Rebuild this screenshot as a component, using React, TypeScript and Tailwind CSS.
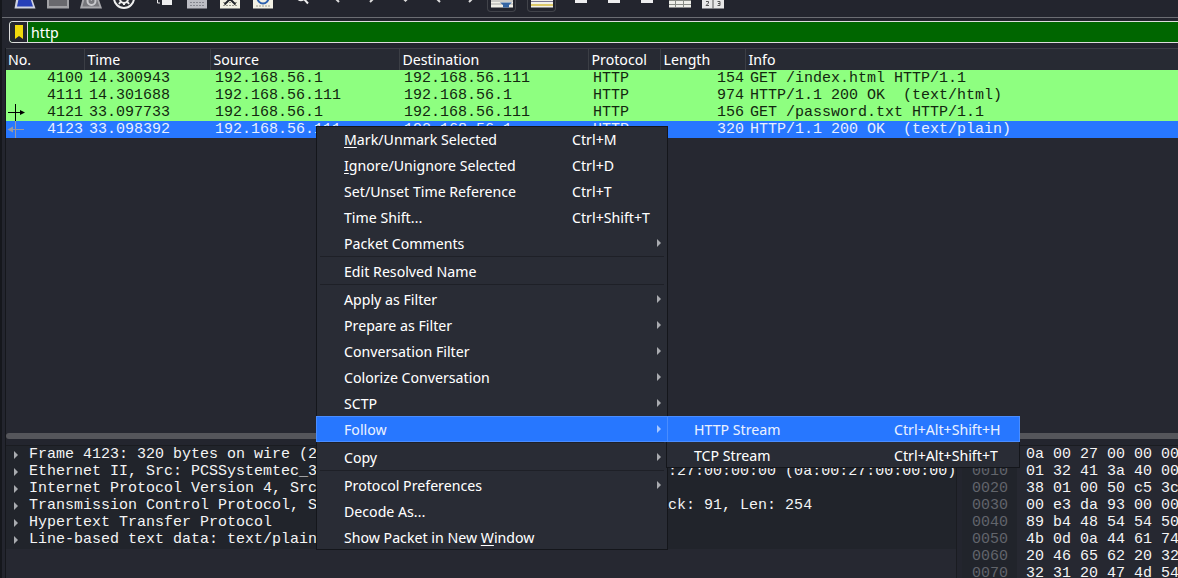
import React from "react";

const packets = [
  { no: "4100", time: "14.300943", source: "192.168.56.1", destination: "192.168.56.111", length: "154", info: "GET /index.html HTTP/1.1" },
  { no: "4111", time: "14.301688", source: "192.168.56.111", destination: "192.168.56.1", length: "974", info: "HTTP/1.1 200 OK  (text/html)" },
  { no: "4121", time: "33.097733", source: "192.168.56.1", destination: "192.168.56.111", length: "156", info: "GET /password.txt HTTP/1.1", mark: "request" },
  { no: "4123", time: "33.098392", source: "192.168.56.111", destination: "192.168.56.1", length: "320", info: "HTTP/1.1 200 OK  (text/plain)", mark: "response", selected: true },
];

const details = [
  "Frame 4123: 320 bytes on wire (2560 bits), 320 bytes captured (2560 bits)",
  "Ethernet II, Src: PCSSystemtec_34:5a:1c (08:00:27:34:5a:1c), Dst: 0a:00:27:00:00:00 (0a:00:27:00:00:00)",
  "Internet Protocol Version 4, Src: 192.168.56.111, Dst: 192.168.56.1",
  "Transmission Control Protocol, Src Port: 80, Dst Port: 50492, Seq: 1, Ack: 91, Len: 254",
  "Hypertext Transfer Protocol",
  "Line-based text data: text/plain (12 lines)",
];

const hexRows = [
  ["0000", "0a 00 27 00 00 00"],
  ["0010", "01 32 41 3a 40 00"],
  ["0020", "38 01 00 50 c5 3c"],
  ["0030", "00 e3 da 93 00 00"],
  ["0040", "89 b4 48 54 54 50"],
  ["0050", "4b 0d 0a 44 61 74"],
  ["0060", "20 46 65 62 20 32"],
  ["0070", "32 31 20 47 4d 54"],
];

type Entry = { label: React.ReactNode; keys?: string; sub?: boolean; active?: boolean };

const groups: Entry[][] = [
  [
    { label: <><Key>M</Key>ark/Unmark Selected</>, keys: "Ctrl+M" },
    { label: <><Key>I</Key>gnore/Unignore Selected</>, keys: "Ctrl+D" },
    { label: "Set/Unset Time Reference", keys: "Ctrl+T" },
    { label: "Time Shift…", keys: "Ctrl+Shift+T" },
    { label: "Packet Comments", sub: true },
  ],
  [{ label: "Edit Resolved Name" }],
  [
    { label: "Apply as Filter", sub: true },
    { label: "Prepare as Filter", sub: true },
    { label: "Conversation Filter", sub: true },
    { label: "Colorize Conversation", sub: true },
    { label: "SCTP", sub: true },
    { label: "Follow", sub: true, active: true },
  ],
  [{ label: "Copy", sub: true }],
  [
    { label: "Protocol Preferences", sub: true },
    { label: "Decode As…" },
    { label: <>Show Packet in New <Key>W</Key>indow</> },
  ],
];

function Key({ children }: { children: React.ReactNode }) {
  return <span className="underline decoration-1 underline-offset-2">{children}</span>;
}

function Triangle({ className }: { className: string }) {
  return (
    <svg viewBox="0 0 4 8" className={`h-2 w-1 shrink-0 ${className}`} aria-hidden="true">
      <path d="M0 0 4 4 0 8Z" fill="currentColor" />
    </svg>
  );
}

function ToolButton({ label, className = "w-6", children }: { label: string; className?: string; children: React.ReactNode }) {
  return (
    <button aria-label={label} className={`h-3 shrink-0 ${className}`}>
      <svg viewBox="0 0 24 12" className="h-3 w-6">{children}</svg>
    </button>
  );
}

function Toolbar() {
  return (
    <div className="flex h-[18px] items-start border-b border-[#6b6d73] pl-[11px]">
      <div className="flex gap-[9px]">
        <ToolButton label="Start capture">
          <path d="M3.500-3h15L22.500 8.500h-21Z" fill="#d0d3e0" />
          <path d="M6-3h11l3 9.500H4Z" fill="#2740b8" />
        </ToolButton>
        <ToolButton label="Stop capture">
          <path d="M1-2h22V8.500H1Z" fill="#a2a2a6" />
          <path d="M3-2h18V6H3Z" fill="#69696e" />
        </ToolButton>
        <ToolButton label="Restart capture">
          <path d="M4-3h15L23 8.500H1Z" fill="#a8a8ac" />
          <path d="M6-3h11l3.500 9.500h-17Z" fill="#77777c" />
          <circle cx="12.500" cy="1" r="4" fill="none" stroke="#c9c9cd" strokeWidth="2" />
          <path d="M8-2h5v3Z" fill="#c9c9cd" />
        </ToolButton>
        <ToolButton label="Capture options">
          <circle cx="12" cy="-2" r="10" fill="#2a2c33" stroke="#f0f0f0" strokeWidth="2" />
          <circle cx="12" cy="-1" r="4" fill="none" stroke="#f0f0f0" strokeWidth="2" />
          <path d="M8.500 2 7 4M12 3v2M15.500 2 17 4" stroke="#f0f0f0" strokeWidth="2" />
        </ToolButton>
      </div>
      <div className="flex gap-[9px] pl-4">
        <ToolButton label="Open file">
          <path d="M10-2h10v7H10Z" fill="#eeeeef" />
          <path d="M5.500-2v5H8" fill="none" stroke="#eeeeef" />
        </ToolButton>
        <ToolButton label="Save file">
          <path d="M2-2h20V8.500H2Z" fill="#bcbdc4" />
          <path d="M5 2.500h14M5 5.500h14" stroke="#85868f" strokeDasharray="2 1" />
        </ToolButton>
        <ToolButton label="Close file">
          <path d="M2-2h20V8.500H2Z" fill="#f3f1e4" />
          <path d="M5 2.500h14M5 5.500h14" stroke="#9c9b8f" strokeDasharray="2 1" />
          <path d="M6.500 4.500 12-1l5.500 5.500" fill="none" stroke="#24262b" strokeWidth="2" />
        </ToolButton>
        <ToolButton label="Reload file">
          <path d="M2-2h20V8.500H2Z" fill="#f3f1e4" />
          <path d="M5 6h14" stroke="#9c9b8f" strokeDasharray="2 1" />
          <circle cx="12" cy="-2" r="5.500" fill="none" stroke="#2c60ae" strokeWidth="2" />
        </ToolButton>
      </div>
      <div className="flex gap-[9px] pl-5">
        <ToolButton label="Find packet"><path d="m9-1 4 4.500M2-2q3 3.500 6.500 1.500" fill="none" stroke="#eee" strokeWidth="2" /></ToolButton>
        <ToolButton label="Previous packet"><path d="m7-2 4 4" stroke="#ddd" strokeWidth="2" /></ToolButton>
        <ToolButton label="Next packet"><path d="m13-2-4 4" stroke="#ddd" strokeWidth="2" /></ToolButton>
        <ToolButton label="Go to packet"><path d="M9-1.500 11.500 1 14-1.500" fill="none" stroke="#ddd" strokeWidth="1.500" /></ToolButton>
        <ToolButton label="First packet"><path d="m9-2 4 4" stroke="#ddd" strokeWidth="2" /></ToolButton>
        <ToolButton label="Last packet"><path d="m13-2-4 4" stroke="#ddd" strokeWidth="2" /></ToolButton>
      </div>
      <div className="flex gap-[11px] pl-[3px]">
        <ToolButton label="Auto scroll" className="flex w-[29px] justify-center rounded-b border border-t-0 border-[#41434a]">
          <path d="M1-2h22V7.500H1Z" fill="#f1f0e8" />
          <path d="M1 1h22M1 4h22" stroke="#a6a6a6" />
          <path d="M10 2.500h12L19 5v2.500h-6V5Z" fill="#3465a4" />
        </ToolButton>
        <ToolButton label="Colorize packets" className="flex w-[29px] justify-center rounded-b border border-t-0 border-[#41434a]">
          <path d="M1-2h22V7.500H1Z" fill="#f1f0e8" />
          <path d="M1 1.500h22" stroke="#7c7894" />
          <path d="M1 5h22" stroke="#d6bd3e" strokeWidth="1.500" />
        </ToolButton>
      </div>
      <div className="flex gap-[9px] pl-[13px]">
        <ToolButton label="Zoom in"><path d="M6-2h12v5H6Z" fill="#eeeeef" /></ToolButton>
        <ToolButton label="Zoom out"><path d="M6-2h12v5H6Z" fill="#eeeeef" /></ToolButton>
        <ToolButton label="Normal size"><path d="M6-2h12v5H6Z" fill="#eeeeef" /></ToolButton>
        <ToolButton label="Resize columns">
          <path d="M1-2h22V7.500H1Z" fill="#eeeee9" />
          <path d="M1 .5h22M1 4.500h22M7.500 0v8M15.500 0v8" stroke="#888b85" />
        </ToolButton>
        <ToolButton label="Reset layout">
          <path d="M1-2h22V8.500H1Z" fill="#e8e8e8" />
          <path d="M12-2V8.500" stroke="#555" />
          <path d="M5 1.500h2.500v1.500L5 5.500h3M16.500 1.500H19v4h-2.500M17 3.500h2" fill="none" stroke="#555" />
        </ToolButton>
      </div>
    </div>
  );
}

function RelatedMark({ kind }: { kind?: string }) {
  if (!kind) return null;
  return kind === "request" ? (
    <svg viewBox="0 0 20 17" className="h-[17px] w-5 text-black" aria-label="Request">
      <path d="M9.500 0v17M2 8.500h12" stroke="currentColor" />
      <path d="M14 6l5 2.500-5 2.500Z" fill="currentColor" />
    </svg>
  ) : (
    <svg viewBox="0 0 20 17" className="h-[17px] w-5 text-[#9a9aa2]" aria-label="Response">
      <path d="M9.500 0v17M6 8.500h12" stroke="currentColor" />
      <path d="M7 5.500 1.500 8.500 7 11.500Z" fill="currentColor" />
    </svg>
  );
}

function PacketTable() {
  const head = "border-l border-[#3b3e45] py-0 pr-0 pl-[3px] text-left align-top font-normal";
  return (
    <table className="w-full table-fixed border-collapse">
      <colgroup>
        <col className="w-[78px]" />
        <col className="w-[126px]" />
        <col className="w-[189px]" />
        <col className="w-[189px]" />
        <col className="w-[72px]" />
        <col className="w-[85px]" />
        <col />
      </colgroup>
      <thead>
        <tr className="h-[21px] bg-[#272a33] text-[15px] leading-[20px] text-white">
          <th className="py-0 pl-[2px] text-left align-top font-normal">No.</th>
          <th className={head}>Time</th>
          <th className={head}>Source</th>
          <th className={head}>Destination</th>
          <th className={head}>Protocol</th>
          <th className={head}>Length</th>
          <th className={head}>Info</th>
        </tr>
      </thead>
      <tbody className="font-['Liberation_Mono',monospace] text-[15px] leading-[17px] whitespace-pre">
        {packets.map((p) => (
          <tr key={p.no} className={p.selected ? "bg-[#2777ff] text-[#e6eeff]" : "bg-[#8eff80] text-[#12270f]"}>
            <td className="p-0">
              <div className="flex h-[17px] items-center justify-between pr-[1px]">
                <span className="w-5"><RelatedMark kind={p.mark} /></span>
                <span className="leading-[17px]">{p.no}</span>
              </div>
            </td>
            <td className="py-0 pl-[5px]">{p.time}</td>
            <td className="py-0 pl-[5px]">{p.source}</td>
            <td className="py-0 pl-[5px]">{p.destination}</td>
            <td className="py-0 pl-[5px]">HTTP</td>
            <td className="py-0 pr-[1px] text-right">{p.length}</td>
            <td className="py-0 pl-[5px]">{p.info}</td>
          </tr>
        ))}
      </tbody>
    </table>
  );
}

function MenuItem({ entry, keysWidth }: { entry: Entry; keysWidth: string }) {
  return (
    <button
      role="menuitem"
      className={`flex h-[26px] w-full items-center pr-[7px] pl-7 text-left ${entry.active ? "bg-[#2777ff] text-[#e9f0ff] ring-1 ring-[#4a8dff] ring-inset" : ""}`}
    >
      <span className="flex-1">{entry.label}</span>
      {entry.keys && <span className={keysWidth}>{entry.keys}</span>}
      {entry.sub && <Triangle className={entry.active ? "text-[#a9c8ff]" : "text-[#a9abb0]"} />}
    </button>
  );
}

function ContextMenu() {
  return (
    <div className="absolute top-[126px] left-[316px] flex items-start text-[15px] leading-[26px] whitespace-nowrap text-white">
      <div role="menu" className="w-[352px] bg-[#292c35] shadow-[inset_0_0_0_1px_#14161b]">
        {groups.map((group, i) => (
          <div key={i} className={i ? "relative pt-[2px] before:absolute before:inset-x-1 before:top-0 before:h-px before:bg-[#1e2027]" : ""}>
            {group.map((entry, j) => (
              <MenuItem key={j} entry={entry} keysWidth="w-[89px]" />
            ))}
          </div>
        ))}
      </div>
      <div role="menu" className="mt-[290px] -ml-[2px] w-[354px] bg-[#292c35] shadow-[inset_0_0_0_1px_#14161b]">
        <MenuItem entry={{ label: "HTTP Stream", keys: "Ctrl+Alt+Shift+H", active: true }} keysWidth="w-[119px]" />
        <MenuItem entry={{ label: "TCP Stream", keys: "Ctrl+Alt+Shift+T" }} keysWidth="w-[119px]" />
      </div>
    </div>
  );
}

export default function App() {
  return (
    <div className="relative flex h-screen flex-col overflow-hidden bg-[#23252e] font-['Noto_Sans_Display','Noto_Sans',sans-serif] text-[#f4f4f5]">
      <div className="flex min-h-0 flex-1 flex-col border-l-2 border-[#15171c]">
        <Toolbar />
        <div className="pt-[3px] pb-[5px] pl-[7px]">
          <div className="flex h-[22px] overflow-hidden rounded-l border border-r-0 border-[#dcdcdc] bg-[#006600]">
            <button aria-label="Filter bookmarks" className="flex w-[18px] items-center justify-center border-r border-[#dcdcdc] bg-[#23252e]">
              <svg viewBox="0 0 8 14" className="h-3.5 w-2"><path d="M0 0h8v14l-4-3-4 3Z" fill="#f0d90c" /></svg>
            </button>
            <input aria-label="Display filter" defaultValue="http" className="min-w-0 flex-1 bg-transparent px-[3px] text-[15px] text-white outline-none" />
          </div>
        </div>
        <main className="ml-[3px] flex min-h-0 flex-1 flex-col border-l border-[#15171c]">
          <section className="h-[385px] shrink-0 border-t border-[#3b3e45] bg-[#262831]">
            <PacketTable />
          </section>
          <div className="h-1.5 shrink-0 rounded-l-full bg-[#55565b]" />
          <div className="mt-1.5 flex min-h-0 flex-1 font-['Liberation_Mono',monospace] text-[15px] leading-[17px] whitespace-pre">
            <section className="min-w-0 flex-1 overflow-hidden border-t border-r border-[#1a1c21] bg-[#262831]">
              <ul className="bg-[#21242b] pb-[1px]">
                {details.map((line) => (
                  <li key={line} className="flex items-center gap-[11px] pl-2">
                    <Triangle className="text-[#a9abb0]" />
                    <span>{line}</span>
                  </li>
                ))}
              </ul>
            </section>
            <section className="ml-[5px] flex w-[216px] shrink-0 overflow-hidden border-t border-[#1a1c21] bg-[#262831]">
              <table className="border-collapse self-start">
                <tbody>
                  {hexRows.map(([offset, bytes]) => (
                    <tr key={offset}>
                      <td className="w-[55px] bg-[#21242b] py-0 pr-[9px] pl-[10px] text-[#62656b]">{offset}</td>
                      <td className="py-0 pl-[9px]">{bytes}</td>
                    </tr>
                  ))}
                </tbody>
              </table>
            </section>
          </div>
        </main>
      </div>
      <ContextMenu />
    </div>
  );
}
